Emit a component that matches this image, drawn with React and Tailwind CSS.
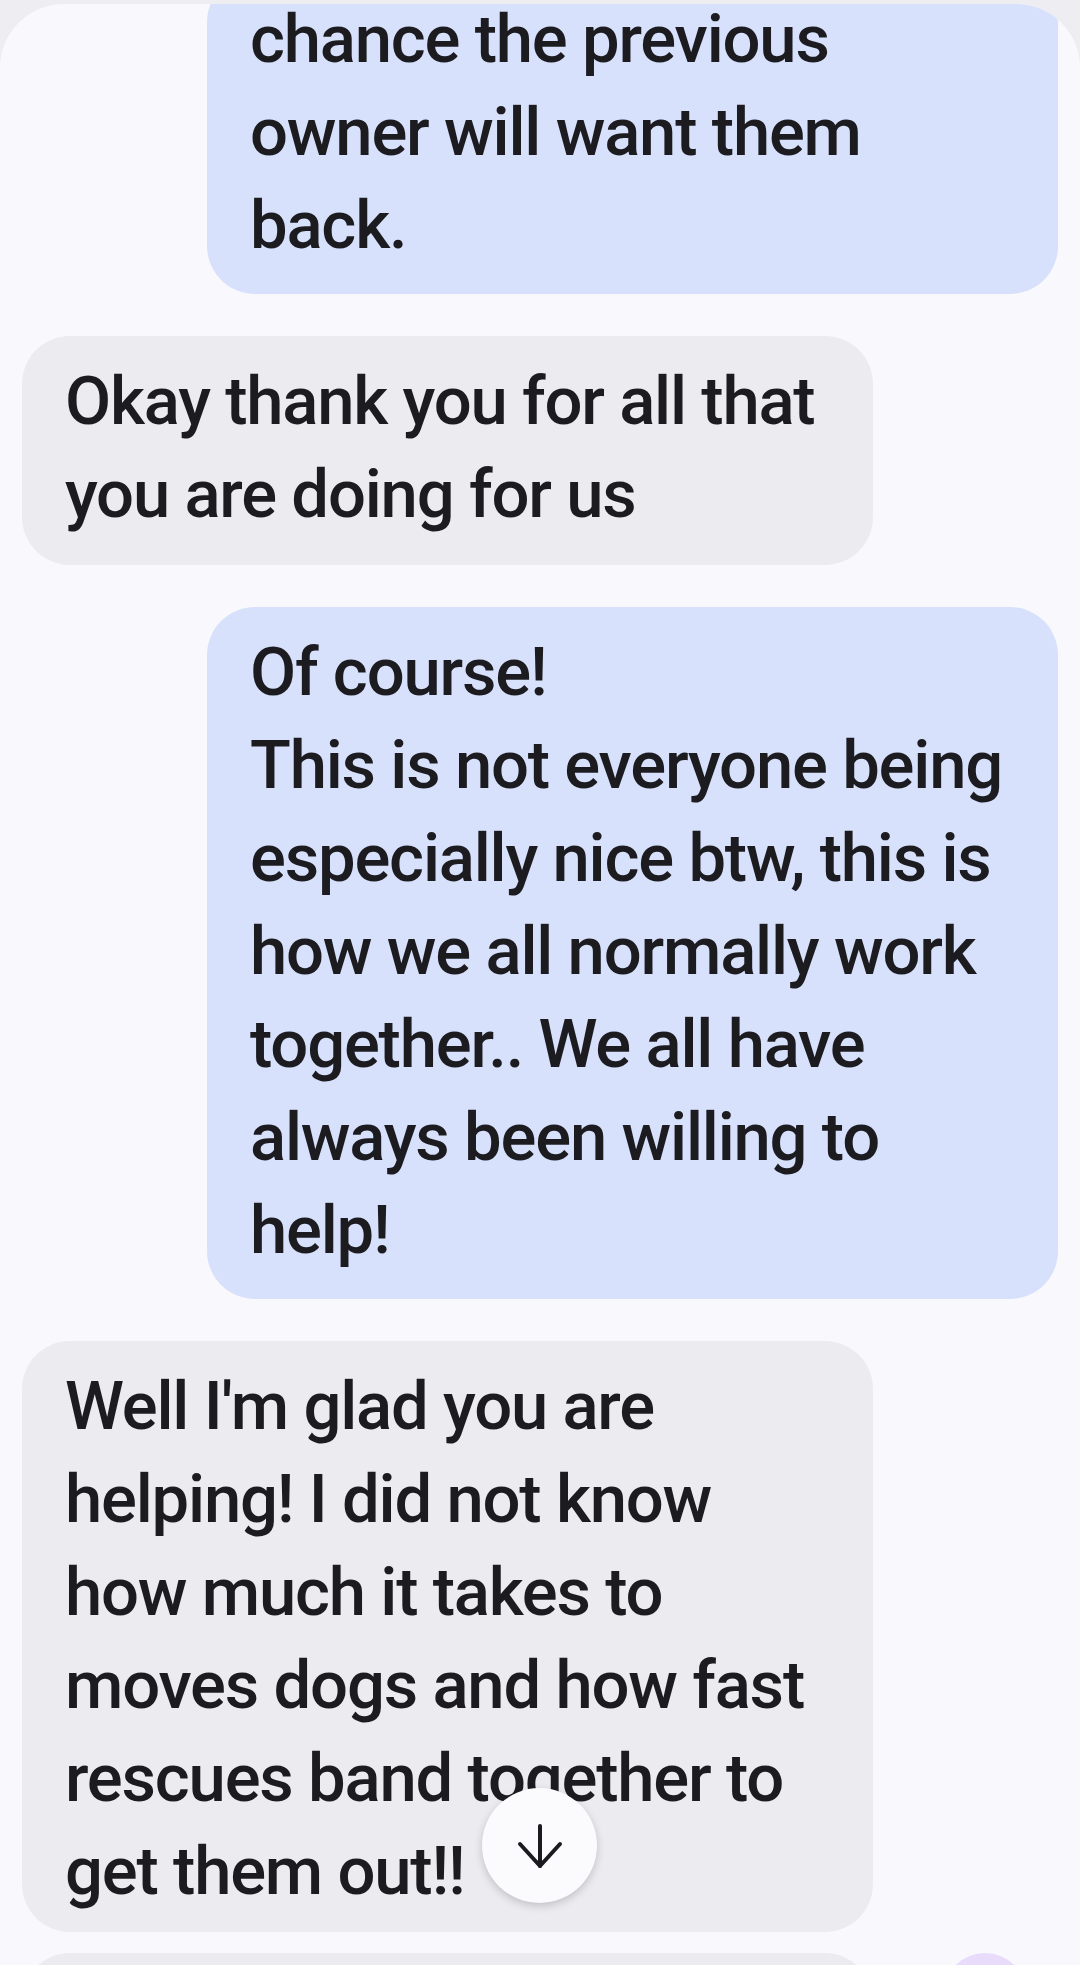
const messages = [
  {
    from: 'me',
    lines: ['chance the previous', 'owner will want them', 'back.'],
    className: '-mt-[30px] pt-[19px] pb-[22px]',
  },
  {
    from: 'them',
    lines: ['Okay thank you for all that', 'you are doing for us'],
    className: 'mt-[42px] pt-[19px] pb-[24px]',
  },
  {
    from: 'me',
    lines: [
      'Of course!',
      'This is not everyone being',
      'especially nice btw, this is',
      'how we all normally work',
      'together.. We all have',
      'always been willing to',
      'help!',
    ],
    className: 'mt-[42px] pt-[19px] pb-[22px]',
  },
  {
    from: 'them',
    lines: [
      "Well I'm glad you are",
      'helping! I did not know',
      'how much it takes to',
      'moves dogs and how fast',
      'rescues band together to',
      'get them out!!',
    ],
    className: 'mt-[42px] pt-[19px] pb-[14px]',
  },
];

function Bubble({ from, lines, className }) {
  const side = from === 'me' ? 'ml-[207px] bg-[#d8e1fb]' : 'ml-[22px] bg-[#ebebf0]';
  return (
    <div className={`w-[851px] shrink-0 rounded-[48px] pl-[43px] ${side} ${className}`}>
      {lines.map((line) => (
        <div
          key={line}
          className="whitespace-nowrap text-[67px] leading-[93px] font-medium tracking-[-1.2px] text-[#1b1b20]"
        >
          {line}
        </div>
      ))}
    </div>
  );
}

export default function App() {
  return (
    <div
      className="h-[1965px] overflow-hidden bg-[#eeeef2] pt-[4px]"
      style={{ fontFamily: 'Roboto, "Liberation Sans", sans-serif' }}
    >
      <div className="relative flex h-full flex-col overflow-hidden rounded-t-[64px] bg-[#f8f8fd]">
        {messages.map((m, i) => (
          <Bubble key={i} {...m} />
        ))}

        <div className="mt-[21px] flex shrink-0 items-start">
          <div className="ml-[22px] h-[120px] w-[851px] rounded-t-[48px] bg-[#ebebf0]" />
          <div className="ml-[70px] h-[84px] w-[84px] rounded-full bg-[#e9dcfa]" />
        </div>

        {/* jump to latest */}
        <button className="absolute left-[482px] top-[1784px] flex h-[115px] w-[115px] items-center justify-center rounded-full bg-[#fbfbfe] shadow-[0_3px_8px_rgba(0,0,0,0.18)]">
          <svg width="48" height="48" viewBox="0 0 48 48" fill="none" stroke="#1b1b1f" strokeWidth="4" strokeLinecap="round" strokeLinejoin="round">
            <path d="M24 4v40" />
            <path d="M4 22l20 22 20-22" />
          </svg>
        </button>
      </div>
    </div>
  );
}
